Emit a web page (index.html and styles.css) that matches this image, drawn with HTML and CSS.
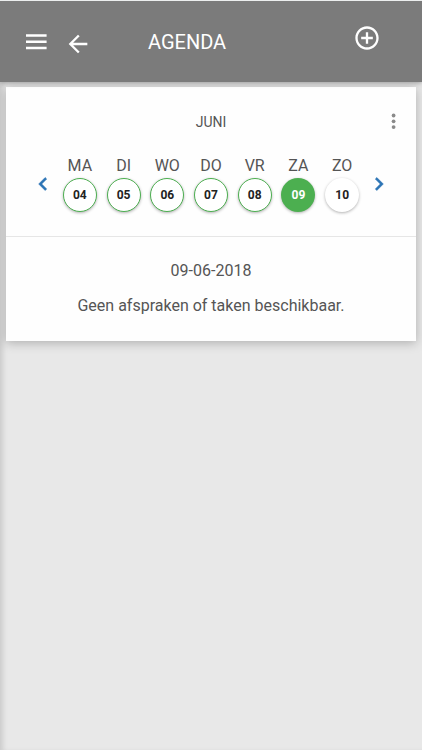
FILE: index.html
```
<!DOCTYPE html>
<html lang="nl">
<head>
  <meta charset="UTF-8">
  <meta name="viewport" content="width=device-width, initial-scale=1.0">
  <title>Agenda</title>
  <link rel="stylesheet" href="styles.css">
</head>
<body>

  <!-- Header -->
  <header class="header">
    <button class="icon-button" type="button" aria-label="Menu">
      <svg width="28" height="28" viewBox="0 0 28 28"><path d="M4 6.300h20.600v2.500H4zM4 12.500h20.600V15H4zM4 18.700h20.600v2.500H4z"/></svg>
    </button>
    <button class="icon-button back" type="button" aria-label="Terug">
      <svg width="28" height="28" viewBox="0 0 24 24"><path d="M20 11H7.83l5.59-5.59L12 4l-8 8 8 8 1.41-1.41L7.83 13H20v-2z"/></svg>
    </button>
    <h1 class="title">AGENDA</h1>
    <button class="icon-button add" type="button" aria-label="Toevoegen">
      <svg width="28" height="28" viewBox="0 0 24 24"><path d="M13 7h-2v4H7v2h4v4h2v-4h4v-2h-4V7zm-1-5C6.48 2 2 6.48 2 12s4.480 10 10 10 10-4.480 10-10S17.520 2 12 2zm0 18c-4.410 0-8-3.590-8-8s3.590-8 8-8 8 3.590 8 8-3.590 8-8 8z"/></svg>
    </button>
  </header>

  <main class="content">
    <section class="card">
      <!-- Week -->
      <div class="calendar">
        <div class="month-row">
          <h2 class="month">JUNI</h2>
          <button class="icon-button more" type="button" aria-label="Meer opties">
            <svg width="20" height="20" viewBox="0 0 20 20"><circle cx="9.600" cy="3.500" r="1.900"/><circle cx="9.600" cy="9.300" r="1.900"/><circle cx="9.600" cy="15.100" r="1.900"/></svg>
          </button>
        </div>
        <div class="week">
          <button class="icon-button arrow" type="button" aria-label="Vorige week">
            <svg width="26" height="26" viewBox="0 0 24 24"><path d="M15.410 7.410L14 6l-6 6 6 6 1.410-1.410L10.830 12z"/></svg>
          </button>
          <div class="days">
            <div class="day"><span>MA</span><button class="date open" type="button">04</button></div>
            <div class="day"><span>DI</span><button class="date open" type="button">05</button></div>
            <div class="day"><span>WO</span><button class="date open" type="button">06</button></div>
            <div class="day"><span>DO</span><button class="date open" type="button">07</button></div>
            <div class="day"><span>VR</span><button class="date open" type="button">08</button></div>
            <div class="day"><span>ZA</span><button class="date selected" type="button">09</button></div>
            <div class="day"><span>ZO</span><button class="date" type="button">10</button></div>
          </div>
          <button class="icon-button arrow" type="button" aria-label="Volgende week">
            <svg width="26" height="26" viewBox="0 0 24 24"><path d="M10 6L8.590 7.410 13.170 12l-4.580 4.590L10 18l6-6z"/></svg>
          </button>
        </div>
      </div>

      <!-- Afspraken -->
      <div class="appointments">
        <p>09-06-2018</p>
        <p>Geen afspraken of taken beschikbaar.</p>
      </div>
    </section>
  </main>

</body>
</html>
```

FILE: styles.css
```
* {
  box-sizing: border-box;
}
body {
  display: flex;
  flex-direction: column;
  min-height: 100vh;
  margin: 0;
  font-family: Roboto, Arial, sans-serif;
  font-size: 16px;
  line-height: 20px;
  color: #555;
  background-color: #e8e8e8;
}
.icon-button {
  display: flex;
  padding: 0;
  border: none;
  background: none;
  color: inherit;
  cursor: pointer;
}
.icon-button svg {
  display: block;
  fill: currentColor;
}
.header {
  position: relative;
  display: flex;
  align-items: center;
  height: 82px;
  padding: 0 41px 0 22px;
  border-top: 1px solid #eceeee;
  background-color: #7b7b7b;
  color: #fff;
  box-shadow: 0 1px 5px rgba(0, 0, 0, 0.3);
}
.back {
  margin-left: 14px;
  padding-top: 4px;
}
.title {
  flex: 1;
  margin: 0 0 0 56px;
  font-size: 20px;
  font-weight: 400;
}
.add {
  padding-bottom: 7px;
}
.content {
  flex: 1;
  padding: 5px 6px;
  box-shadow: inset 5px 0 5px -2px rgba(0, 0, 0, 0.12);
}
.card {
  background-color: #fefefe;
  box-shadow: 0 2px 10px rgba(0, 0, 0, 0.25);
}
.calendar {
  padding: 25px 12px 24px;
  border-bottom: 1px solid #e6e6e6;
}
.month-row {
  display: grid;
  grid-template-columns: 20px 1fr 20px;
  margin-bottom: 24px;
}
.month {
  grid-column: 2;
  margin: 0;
  font-size: 14px;
  font-weight: 400;
  line-height: 20px;
  text-align: center;
}
.more {
  color: #8a8a8a;
}
.week {
  display: flex;
  align-items: center;
  gap: 2px;
  padding: 0 12px;
}
.arrow {
  color: #2b74b5;
}
.arrow svg {
  stroke: currentColor;
  stroke-width: 0.5;
}
.days {
  flex: 1;
  display: grid;
  grid-template-columns: repeat(7, 1fr);
}
.day {
  display: flex;
  flex-direction: column;
  align-items: center;
  gap: 2px;
}
.date {
  width: 34px;
  height: 34px;
  padding: 0;
  border: none;
  border-radius: 50%;
  background-color: #fff;
  color: #222;
  font-family: inherit;
  font-size: 12px;
  font-weight: 700;
  box-shadow: 0 1px 3px rgba(0, 0, 0, 0.3);
  cursor: pointer;
}
.open {
  border: 1px solid #4caf50;
}
.selected {
  background-color: #4caf50;
  color: #fff;
}
.appointments {
  padding: 24px 12px 25px;
  text-align: center;
}
.appointments p {
  margin: 0;
}
.appointments p + p {
  margin-top: 15px;
}
```
